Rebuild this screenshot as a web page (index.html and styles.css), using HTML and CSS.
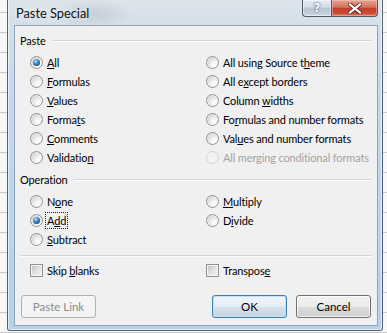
FILE: index.html
```html
<!DOCTYPE html>
<html>
<head>
<meta charset="utf-8">
<title>Paste Special</title>
<link rel="stylesheet" href="styles.css">
</head>
<body>
<div class="window">
  <div class="titlebar">
    <span class="title">Paste Special</span>
    <div class="caption-buttons">
      <div class="cbtn help"><span>?</span></div>
      <div class="cbtn close">
        <svg width="14" height="11" viewBox="0 0 14 11">
          <path d="M2 1.5 L12 9.5 M12 1.5 L2 9.5" stroke="#5a2a22" stroke-width="4" stroke-linecap="square"/>
          <path d="M2 1.5 L12 9.5 M12 1.5 L2 9.5" stroke="#ffffff" stroke-width="2.2" stroke-linecap="square"/>
        </svg>
      </div>
    </div>
  </div>
  <div class="client">
    <div class="group-head"><span>Paste</span><i class="rule"></i></div>
    <div class="opts paste-opts">
      <label class="opt"><span class="radio on"></span><span><u>A</u>ll</span></label>
      <label class="opt"><span class="radio"></span><span>All using Source t<u>h</u>eme</span></label>
      <label class="opt"><span class="radio"></span><span><u>F</u>ormulas</span></label>
      <label class="opt"><span class="radio"></span><span>All e<u>x</u>cept borders</span></label>
      <label class="opt"><span class="radio"></span><span><u>V</u>alues</span></label>
      <label class="opt"><span class="radio"></span><span>Column <u>w</u>idths</span></label>
      <label class="opt"><span class="radio"></span><span>Forma<u>t</u>s</span></label>
      <label class="opt"><span class="radio"></span><span>Fo<u>r</u>mulas and number formats</span></label>
      <label class="opt"><span class="radio"></span><span><u>C</u>omments</span></label>
      <label class="opt"><span class="radio"></span><span>Val<u>u</u>es and number formats</span></label>
      <label class="opt"><span class="radio"></span><span>Validatio<u>n</u></span></label>
      <label class="opt disabled"><span class="radio dis"></span><span>All merging conditional formats</span></label>
    </div>
    <div class="group-head op-head"><span>Operation</span><i class="rule"></i></div>
    <div class="opts op-opts">
      <label class="opt"><span class="radio"></span><span>N<u>o</u>ne</span></label>
      <label class="opt"><span class="radio"></span><span><u>M</u>ultiply</span></label>
      <label class="opt"><span class="radio on"></span><span class="focus">A<u>d</u>d</span></label>
      <label class="opt"><span class="radio"></span><span>D<u>i</u>vide</span></label>
      <label class="opt"><span class="radio"></span><span><u>S</u>ubtract</span></label>
      <span></span>
    </div>
    <div class="sep"></div>
    <div class="opts check-opts">
      <label class="opt"><span class="check"></span><span>Skip <u>b</u>lanks</span></label>
      <label class="opt"><span class="check"></span><span>Transpos<u>e</u></span></label>
    </div>
    <div class="buttons">
      <button class="btn disabled-btn">Paste Link</button>
      <div class="right-buttons">
        <button class="btn default-btn">OK</button>
        <button class="btn">Cancel</button>
      </div>
    </div>
  </div>
</div>
</body>
</html>
```
FILE: styles.css
```css
* { box-sizing: border-box; }
html, body { margin: 0; padding: 0; }
body {
  width: 387px;
  height: 333px;
  overflow: hidden;
  font-family: Lato, "Noto Sans", sans-serif;
  font-size: 11px;
  letter-spacing: -0.15px;
  color: #000;
  background-color: #f7f7f7;
  background-image: repeating-linear-gradient(to bottom, transparent 0, transparent 12px, #c9c9c9 12px, #c9c9c9 13px, transparent 13px, transparent 20px);
}
.window {
  margin-left: 7px;
  width: 376px;
  height: 331px;
  border: 1px solid rgba(45, 55, 70, 0.75);
  border-top: none;
  border-radius: 0 0 3px 3px;
  padding: 0 4px 0 6px;
  display: flex;
  flex-direction: column;
  background:
    radial-gradient(ellipse 40px 14px at 85px 14px, rgba(150, 160, 172, 0.3), rgba(150, 160, 172, 0)),
    linear-gradient(to bottom, #dde4eb 0, #d5dfea 25px, #c6d9ed 80px, #bdd5ee 200px, #b8d1ec 100%);
  box-shadow: inset 1px 0 0 rgba(255, 255, 255, 0.6), inset -1px 0 0 rgba(255, 255, 255, 0.6), inset 0 -1px 0 rgba(255, 255, 255, 0.6);
}
.titlebar {
  height: 25px;
  display: flex;
  align-items: flex-start;
  flex: none;
}
.title {
  font-size: 12.8px;
  letter-spacing: 0;
  line-height: 18px;
  padding-top: 4px;
  padding-left: 2px;
  color: #111;
  text-shadow: 0 0 6px rgba(255, 255, 255, 0.9);
}
.caption-buttons {
  margin-left: auto;
  display: flex;
}
.cbtn {
  height: 17px;
  border: 1px solid #4c5a6c;
  border-top: none;
  display: flex;
  align-items: center;
  justify-content: center;
}
.help {
  width: 29px;
  border-right: none;
  border-radius: 0 0 0 4px;
  background: linear-gradient(to bottom, #e4eaf1 0, #d2dce7 45%, #b6c5d6 50%, #c2d0de 85%, #d3dde8 100%);
  box-shadow: inset 0 0 0 1px rgba(255, 255, 255, 0.45);
}
.help span {
  font-family: "DejaVu Sans", sans-serif;
  font-weight: bold;
  font-size: 12px;
  line-height: 12px;
  color: #fff;
  text-shadow: 0 0 1px #4a5a6e, 0 0 2px #4a5a6e;
}
.close {
  width: 47px;
  border-radius: 0 0 4px 0;
  background: linear-gradient(to bottom, #e6a393 0, #d6735f 45%, #c3412a 52%, #c8472f 80%, #dc7a63 100%);
  box-shadow: inset 0 0 0 1px rgba(255, 220, 210, 0.4);
}
.close svg { display: block; }
.client {
  height: 301px;
  border: 1px solid #8fa3b9;
  background: #f0f0f0;
  display: flex;
  flex-direction: column;
  flex: none;
}
.group-head {
  display: flex;
  align-items: center;
  height: 16px;
  margin: 7px 5px 0 5px;
  line-height: 16px;
}
.group-head .rule {
  flex: 1;
  height: 2px;
  margin-left: 6px;
  border-top: 1px solid #d5d5d5;
  border-bottom: 1px solid #fcfcfc;
}
.op-head { margin-top: 5px; }
.opts {
  display: grid;
  grid-template-columns: 176px 1fr;
  grid-auto-rows: 19px;
  padding-left: 15px;
  margin-top: 4px;
}
.opt {
  display: flex;
  align-items: center;
  gap: 4px;
  white-space: nowrap;
}
.opt u { text-underline-offset: 1px; }
.disabled { color: #a3a3a3; }
.radio {
  width: 13px;
  height: 13px;
  flex: none;
  border-radius: 50%;
  border: 1px solid #929292;
  position: relative;
  background: radial-gradient(circle at 68% 70%, #ffffff 0, #ececec 40%, #c9c9c9 85%);
  box-shadow: inset 0 0 0 1px rgba(255, 255, 255, 0.55);
}
.radio.on::after {
  content: "";
  position: absolute;
  left: 2px;
  top: 2px;
  width: 7px;
  height: 7px;
  border-radius: 50%;
  background: radial-gradient(circle at 38% 32%, #bfe3fa 0, #4a93d0 35%, #15508c 75%, #0e3c6c 100%);
}
.radio.dis {
  border-color: #d3d3d3;
  background: #f2f2f2;
  box-shadow: none;
}
.focus {
  outline: 1px dotted #222;
  outline-offset: 1px;
  line-height: 13px;
}
.sep {
  height: 2px;
  margin: 6px 5px 0 5px;
  border-top: 1px solid #d5d5d5;
  border-bottom: 1px solid #fcfcfc;
}
.check-opts { margin-top: 4px; }
.check {
  width: 13px;
  height: 13px;
  flex: none;
  border: 1px solid #8e8f8f;
  background: linear-gradient(135deg, #b9bcc0 0, #dcdde0 45%, #f3f3f3 100%);
  box-shadow: inset 0 0 0 1px #f4f4f4;
}
.buttons {
  display: flex;
  justify-content: space-between;
  margin-top: 15px;
  padding: 0 6px;
}
.right-buttons {
  display: flex;
  gap: 9px;
}
.btn {
  width: 75px;
  height: 23px;
  padding: 0;
  font: inherit;
  font-size: 11.5px;
  color: #000;
  border: 1px solid #707070;
  border-radius: 3px;
  background: linear-gradient(to bottom, #f2f2f2 0, #ebebeb 50%, #dddddd 50%, #cfcfcf 100%);
  box-shadow: inset 0 0 0 1px rgba(255, 255, 255, 0.75);
}
.default-btn {
  border-color: #3c7fb1;
  background: linear-gradient(to bottom, #eef4f9 0, #e6eef5 50%, #d6e1ea 50%, #c9d6e1 100%);
  box-shadow: inset 0 0 0 1px #bfe0f5;
}
.disabled-btn {
  color: #8b8b8b;
  border-color: #adb2b5;
  background: #f4f4f4;
  box-shadow: none;
}
```
